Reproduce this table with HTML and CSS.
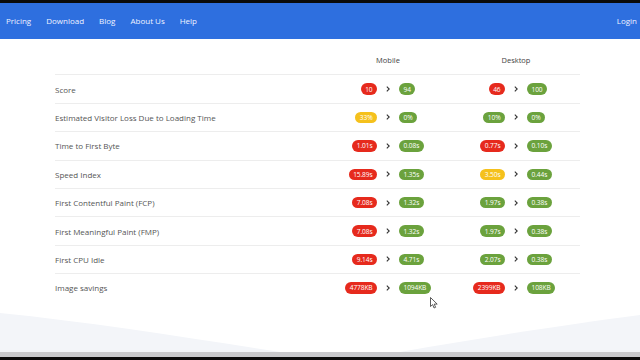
FILE: index.html
```html
<!DOCTYPE html>
<html lang="en">
<head>
<meta charset="utf-8">
<title>Speed report</title>
<link rel="stylesheet" href="styles.css">
</head>
<body>
<div class="frame-top"></div>
<nav class="nav">
  <div class="nav-links">
    <a href="#">Pricing</a>
    <a href="#">Download</a>
    <a href="#">Blog</a>
    <a href="#">About Us</a>
    <a href="#">Help</a>
  </div>
  <a href="#" class="login">Login</a>
</nav>
<main class="main">
  <div class="table">
    <div class="row head">
      <div class="label"></div>
      <div class="cell center">Mobile</div>
      <div class="cell center">Desktop</div>
    </div>
    <div class="row">
      <div class="label">Score</div>
      <div class="cell"><div class="side l"><span class="badge red">10</span></div><svg class="arrow" viewBox="0 0 4 6"><path d="M0.8 0.6 L3.2 3 L0.8 5.4"/></svg><div class="side r"><span class="badge green">94</span></div></div>
      <div class="cell"><div class="side l"><span class="badge red">46</span></div><svg class="arrow" viewBox="0 0 4 6"><path d="M0.8 0.6 L3.2 3 L0.8 5.4"/></svg><div class="side r"><span class="badge green">100</span></div></div>
    </div>
    <div class="row">
      <div class="label">Estimated Visitor Loss Due to Loading Time</div>
      <div class="cell"><div class="side l"><span class="badge yellow">33%</span></div><svg class="arrow" viewBox="0 0 4 6"><path d="M0.8 0.6 L3.2 3 L0.8 5.4"/></svg><div class="side r"><span class="badge green">0%</span></div></div>
      <div class="cell"><div class="side l"><span class="badge green">10%</span></div><svg class="arrow" viewBox="0 0 4 6"><path d="M0.8 0.6 L3.2 3 L0.8 5.4"/></svg><div class="side r"><span class="badge green">0%</span></div></div>
    </div>
    <div class="row">
      <div class="label">Time to First Byte</div>
      <div class="cell"><div class="side l"><span class="badge red">1.01s</span></div><svg class="arrow" viewBox="0 0 4 6"><path d="M0.8 0.6 L3.2 3 L0.8 5.4"/></svg><div class="side r"><span class="badge green">0.08s</span></div></div>
      <div class="cell"><div class="side l"><span class="badge red">0.77s</span></div><svg class="arrow" viewBox="0 0 4 6"><path d="M0.8 0.6 L3.2 3 L0.8 5.4"/></svg><div class="side r"><span class="badge green">0.10s</span></div></div>
    </div>
    <div class="row">
      <div class="label">Speed Index</div>
      <div class="cell"><div class="side l"><span class="badge red">15.89s</span></div><svg class="arrow" viewBox="0 0 4 6"><path d="M0.8 0.6 L3.2 3 L0.8 5.4"/></svg><div class="side r"><span class="badge green">1.35s</span></div></div>
      <div class="cell"><div class="side l"><span class="badge yellow">3.50s</span></div><svg class="arrow" viewBox="0 0 4 6"><path d="M0.8 0.6 L3.2 3 L0.8 5.4"/></svg><div class="side r"><span class="badge green">0.44s</span></div></div>
    </div>
    <div class="row">
      <div class="label">First Contentful Paint (FCP)</div>
      <div class="cell"><div class="side l"><span class="badge red">7.08s</span></div><svg class="arrow" viewBox="0 0 4 6"><path d="M0.8 0.6 L3.2 3 L0.8 5.4"/></svg><div class="side r"><span class="badge green">1.32s</span></div></div>
      <div class="cell"><div class="side l"><span class="badge green">1.97s</span></div><svg class="arrow" viewBox="0 0 4 6"><path d="M0.8 0.6 L3.2 3 L0.8 5.4"/></svg><div class="side r"><span class="badge green">0.38s</span></div></div>
    </div>
    <div class="row">
      <div class="label">First Meaningful Paint (FMP)</div>
      <div class="cell"><div class="side l"><span class="badge red">7.08s</span></div><svg class="arrow" viewBox="0 0 4 6"><path d="M0.8 0.6 L3.2 3 L0.8 5.4"/></svg><div class="side r"><span class="badge green">1.32s</span></div></div>
      <div class="cell"><div class="side l"><span class="badge green">1.97s</span></div><svg class="arrow" viewBox="0 0 4 6"><path d="M0.8 0.6 L3.2 3 L0.8 5.4"/></svg><div class="side r"><span class="badge green">0.38s</span></div></div>
    </div>
    <div class="row">
      <div class="label">First CPU Idle</div>
      <div class="cell"><div class="side l"><span class="badge red">9.14s</span></div><svg class="arrow" viewBox="0 0 4 6"><path d="M0.8 0.6 L3.2 3 L0.8 5.4"/></svg><div class="side r"><span class="badge green">4.71s</span></div></div>
      <div class="cell"><div class="side l"><span class="badge green">2.07s</span></div><svg class="arrow" viewBox="0 0 4 6"><path d="M0.8 0.6 L3.2 3 L0.8 5.4"/></svg><div class="side r"><span class="badge green">0.38s</span></div></div>
    </div>
    <div class="row">
      <div class="label">Image savings</div>
      <div class="cell"><div class="side l"><span class="badge red">4778KB</span></div><svg class="arrow" viewBox="0 0 4 6"><path d="M0.8 0.6 L3.2 3 L0.8 5.4"/></svg><div class="side r"><span class="badge green">1094KB</span></div></div>
      <div class="cell"><div class="side l"><span class="badge red">2399KB</span></div><svg class="arrow" viewBox="0 0 4 6"><path d="M0.8 0.6 L3.2 3 L0.8 5.4"/></svg><div class="side r"><span class="badge green">108KB</span></div></div>
    </div>
  </div>
  <svg class="cursor" viewBox="0 0 8 12"><path d="M0.5 0.5 L0.5 9.5 L2.6 7.6 L4.1 11 L5.6 10.3 L4.2 7.1 L7.2 7.1 Z"/></svg>
</main>
<div class="wave">
  <svg viewBox="0 0 640 50" preserveAspectRatio="none">
    <path d="M0 11 C90 20 190 36 280 50 L0 50 Z" fill="#f3f5f9"/>
    <path d="M400 50 C480 36 570 22 640 13 L640 50 Z" fill="#f3f5f9"/>
  </svg>
</div>
<div class="frame-bottom"></div>
</body>
</html>
```
FILE: styles.css
```css
html, body {
  margin: 0;
  padding: 0;
}
body {
  width: 640px;
  height: 360px;
  overflow: hidden;
  background: #fff;
  font-family: "Open Sans", "Noto Sans", sans-serif;
  display: flex;
  flex-direction: column;
}
.frame-top {
  height: 3px;
  background: #0b0b0b;
}
.nav {
  height: 36px;
  background: #2e6fdf;
  display: flex;
  align-items: center;
  justify-content: space-between;
  padding: 0 3px 2px 6px;
  box-sizing: border-box;
  flex-shrink: 0;
}
.nav-links {
  display: flex;
  gap: 15px;
}
.nav a {
  color: #eef3ff;
  text-decoration: none;
  font-size: 8px;
}
.main {
  position: relative;
  padding: 7px 0 0 55px;
  height: 256px;
}
.table {
  width: 525px;
}
.row {
  display: flex;
  align-items: center;
  height: 28.4px;
  box-sizing: border-box;
  border-top: 1px solid #ededed;
}
.row.head {
  border-top: none;
}
.label {
  flex: 1;
  font-size: 8px;
  color: #555;
}
.cell {
  width: 128px;
  display: flex;
  align-items: center;
}
.cell.center {
  justify-content: center;
  font-size: 7.5px;
  color: #444;
}
.side {
  flex: 1;
  display: flex;
}
.side.l {
  justify-content: flex-end;
}
.arrow {
  width: 4px;
  height: 6px;
  margin: 0 9px;
  fill: none;
  stroke: #333;
  stroke-width: 1.1;
}
.badge {
  display: inline-flex;
  align-items: center;
  height: 11.5px;
  padding: 0 4.5px;
  border-radius: 6px;
  color: #fff;
  font-size: 6.6px;
  letter-spacing: -0.1px;
}
.red { background: #e62a1d; }
.green { background: #6ba23d; }
.yellow { background: #f5c11c; }
.cursor {
  position: absolute;
  left: 430px;
  top: 258px;
  width: 8px;
  height: 12px;
  fill: #fff;
  stroke: #333;
  stroke-width: 0.8;
}
.wave {
  height: 50px;
}
.wave svg {
  display: block;
  width: 640px;
  height: 50px;
}
.frame-bottom {
  flex: 1;
  background: #0b0b0b;
  border-top: 5px solid #c9c9cc;
}
```
